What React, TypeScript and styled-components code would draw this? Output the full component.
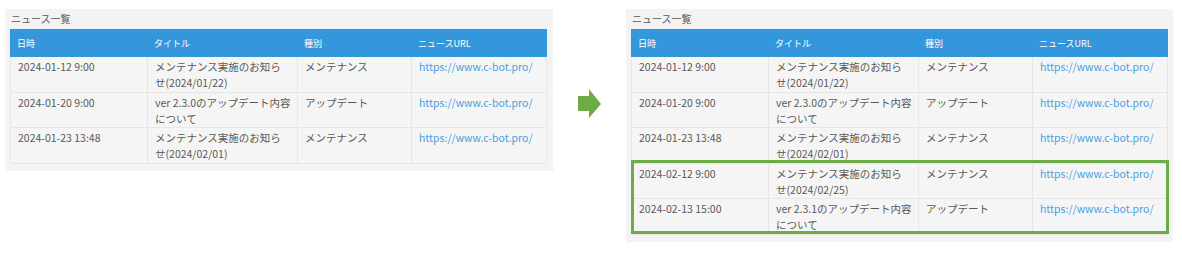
import * as React from 'react'
import styled, { createGlobalStyle } from 'styled-components'

const GlobalStyle = createGlobalStyle`
  html, body {
    margin: 0;
    padding: 0;
    background: #ffffff;
  }
  body {
    font-family: "Noto Sans CJK JP", "Noto Sans", sans-serif;
    color: #595959;
  }
`

const Page = styled('div')`
  display: flex;
  flex-direction: row;
  align-items: flex-start;
  padding: 9px 0 0 5px;
  width: 1182px;
  height: 253px;
  box-sizing: border-box;
`

const Panel = styled('div')<{ $width: number }>`
  width: ${(p) => p.$width}px;
  box-sizing: border-box;
  background: #f3f3f3;
  padding: 0 6px 7px 5px;
`

const PanelTitle = styled('div')`
  height: 20px;
  line-height: 20px;
  font-size: 10px;
  color: #595959;
  padding-left: 1px;
`

const ArrowSlot = styled('div')`
  width: 73px;
  display: flex;
  justify-content: center;
  padding-top: 80px;
`

const Table = styled('div')`
  width: 536px;
  border-left: 1px solid #e6e6e6;
`

const columns = '137px 150px 114px 135px'

const HeaderRow = styled('div')`
  display: grid;
  grid-template-columns: ${columns};
  height: 28px;
  background: #3597db;
  margin-left: -1px;
`

const HeaderCell = styled('div')`
  display: flex;
  align-items: center;
  padding: 0 7px;
  font-size: 9px;
  color: #ffffff;
`

const BodyRow = styled('div')`
  display: grid;
  grid-template-columns: ${columns};
  background: #f5f5f5;
  border-bottom: 1px solid #e6e6e6;
`

const Cell = styled('div')`
  padding: 2px 7px 0.5px 7px;
  font-size: 10.5px;
  line-height: 16px;
  min-height: 32px;
  color: #595959;
  border-right: 1px solid #e6e6e6;
`

const TitleCell = styled(Cell)`
  white-space: pre;
`

const LinkCell = styled(Cell)`
  color: #4a9fe0;
`

const Highlight = styled('div')`
  position: relative;

  &::after {
    content: '';
    position: absolute;
    left: -1px;
    right: -1px;
    top: -4px;
    bottom: 1px;
    border: 3px solid #6dab46;
    pointer-events: none;
  }
`

interface INewsItem {
  date: string
  title: string
  kind: string
  url: string
}

const baseNews: INewsItem[] = [
  { date: '2024-01-12 9:00', title: 'メンテナンス実施のお知ら\nせ(2024/01/22)', kind: 'メンテナンス', url: 'https://www.c-bot.pro/' },
  { date: '2024-01-20 9:00', title: 'ver 2.3.0のアップデート内容\nについて', kind: 'アップデート', url: 'https://www.c-bot.pro/' },
  { date: '2024-01-23 13:48', title: 'メンテナンス実施のお知ら\nせ(2024/02/01)', kind: 'メンテナンス', url: 'https://www.c-bot.pro/' }
]

const addedNews: INewsItem[] = [
  { date: '2024-02-12 9:00', title: 'メンテナンス実施のお知ら\nせ(2024/02/25)', kind: 'メンテナンス', url: 'https://www.c-bot.pro/' },
  { date: '2024-02-13 15:00', title: 'ver 2.3.1のアップデート内容\nについて', kind: 'アップデート', url: 'https://www.c-bot.pro/' }
]

function NewsRow ({ item }: { item: INewsItem }) {
  return (
    <BodyRow>
      <Cell>{item.date}</Cell>
      <TitleCell>{item.title}</TitleCell>
      <Cell>{item.kind}</Cell>
      <LinkCell>{item.url}</LinkCell>
    </BodyRow>
  )
}

function NewsPanel ({ width, added }: { width: number, added?: INewsItem[] }) {
  return (
    <Panel $width={width}>
      <PanelTitle>ニュース一覧</PanelTitle>
      <Table>
        <HeaderRow>
          <HeaderCell>日時</HeaderCell>
          <HeaderCell>タイトル</HeaderCell>
          <HeaderCell>種別</HeaderCell>
          <HeaderCell>ニュースURL</HeaderCell>
        </HeaderRow>
        { baseNews.map((item) => <NewsRow key={item.date} item={item} />) }
        { added && (
          <Highlight>
            { added.map((item) => <NewsRow key={item.date} item={item} />) }
          </Highlight>
        )}
      </Table>
    </Panel>
  )
}

function Arrow () {
  return (
    <svg width='24' height='30' viewBox='0 0 24 30'>
      <polygon points='0,7 11,7 11,0 23,15 11,29 11,22 0,22' fill='#6dab46' />
    </svg>
  )
}

export default function App () {
  return (
    <>
      <GlobalStyle />
      <Page>
        <NewsPanel width={548} />
        <ArrowSlot>
          <Arrow />
        </ArrowSlot>
        <NewsPanel width={547} added={addedNews} />
      </Page>
    </>
  )
}
